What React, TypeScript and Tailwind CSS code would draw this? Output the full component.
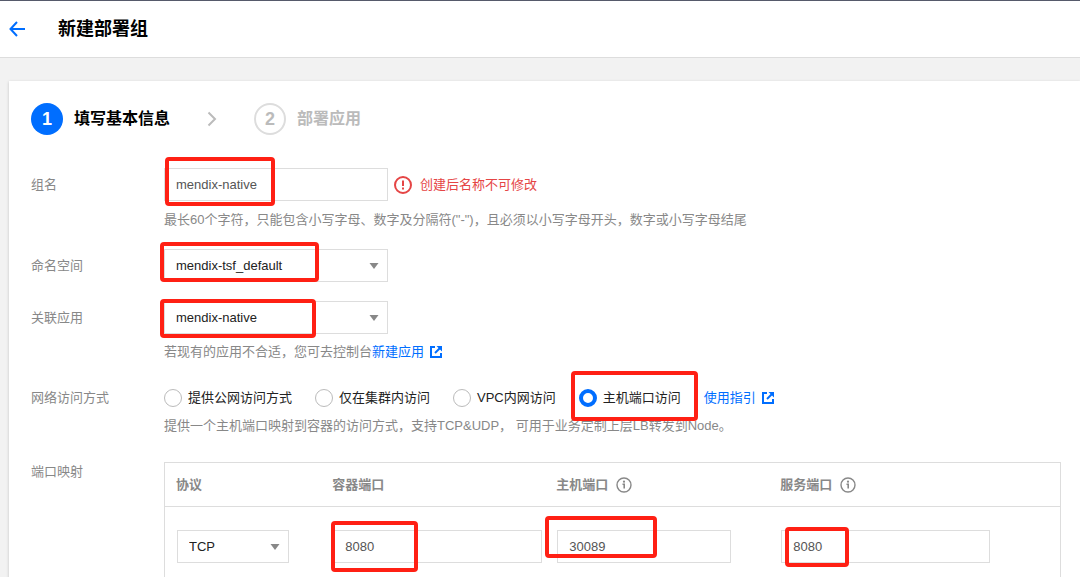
import type { ReactNode } from "react";

type MarkProps = { className: string };

// 红色标注框
const Mark = ({ className }: MarkProps) => (
  <span
    aria-hidden="true"
    className={`pointer-events-none absolute z-10 rounded-sm border-4 border-[#ff2014] ${className}`}
  />
);

const ExternalIcon = () => (
  <svg viewBox="0 0 12 12" className="h-3 w-3" fill="none" stroke="currentColor" strokeWidth="2">
    <path d="M5 1H1v10h10V7" />
    <path d="M10.500 1.500L5 7" />
    <path d="M6.500 0H12v5.500z" fill="currentColor" stroke="none" />
  </svg>
);

const InfoIcon = () => (
  <svg viewBox="0 0 16 16" className="h-4 w-4" fill="none" stroke="#888" strokeWidth="1.4">
    <circle cx="8" cy="8" r="7" />
    <circle cx="8" cy="4.700" r="1.100" fill="#888" stroke="none" />
    <path d="M6.500 7.200h1.700v4.300" strokeWidth="1.600" />
  </svg>
);

type FieldProps = { label: string; htmlFor?: string; children: ReactNode };

const Field = ({ label, htmlFor, children }: FieldProps) => (
  <div className="grid grid-cols-[133px_minmax(0,1fr)]">
    <label htmlFor={htmlFor} className="leading-[33px] text-[#888]">
      {label}
    </label>
    <div>{children}</div>
  </div>
);

type SelectProps = { id: string; value: string; label?: string };

const Select = ({ id, value, label }: SelectProps) => (
  <>
    <select
      id={id}
      aria-label={label}
      className="h-[33px] w-full appearance-none border border-[#ddd] bg-white pr-8 pl-[11px] text-[#222] outline-none"
    >
      <option>{value}</option>
    </select>
    <svg viewBox="0 0 10 6" className="pointer-events-none absolute top-3.5 right-[9px] h-1.5 w-2.5">
      <path d="M0.500 0h9L5 6z" fill="#888" />
    </svg>
  </>
);

const inputClass = "h-[33px] w-full border border-[#ddd] bg-white px-[11px] text-[#555] outline-none";
const linkClass = "inline-flex items-center gap-1.5 text-[#006eff]";

const accessModes = [
  { id: "public", label: "提供公网访问方式" },
  { id: "cluster", label: "仅在集群内访问" },
  { id: "vpc", label: "VPC内网访问" },
  { id: "host", label: "主机端口访问" },
];

const App = () => (
  <div className='h-screen overflow-hidden bg-[#f2f2f2] font-["Liberation_Sans","Noto_Sans_CJK_SC",sans-serif] text-[13px] leading-5'>
    <header className="flex h-[58px] items-center border-t border-b border-t-[#565a6b] border-b-[#ddd] bg-white pl-[9px]">
      <button type="button" aria-label="返回" className="mr-8 text-[#006eff]">
        <svg viewBox="0 0 17 16" className="h-4 w-[17px]" fill="none" stroke="currentColor" strokeWidth="2">
          <path d="M8 1L1.500 8L8 15M1.500 8H16" />
        </svg>
      </button>
      <h1 className="text-lg font-bold text-black">新建部署组</h1>
    </header>

    <main className="mt-[23px] ml-[9px] bg-white pt-[22px] pr-[19px] pl-[22px] shadow-[0_1px_3px_rgba(0,0,0,0.2)]">
      <ol className="flex h-8 items-center text-base font-bold">
        <li className="flex items-center gap-[11px] text-black">
          <span className="flex h-8 w-8 items-center justify-center rounded-full bg-[#006eff] text-lg text-white">1</span>
          填写基本信息
        </li>
        <li aria-hidden="true" className="mx-[37px]">
          <svg viewBox="0 0 10 16" className="h-4 w-2.5" fill="none" stroke="#bbb" strokeWidth="2">
            <path d="M1.500 1.500L8 8l-6.500 6.500" />
          </svg>
        </li>
        <li className="flex items-center gap-[11px] text-[#bbb]">
          <span className="flex h-8 w-8 items-center justify-center rounded-full border-2 border-[#ddd] text-lg">2</span>
          部署应用
        </li>
      </ol>

      <form className="mt-[33px] flex flex-col gap-[19px]">
        <Field label="组名" htmlFor="group-name">
          <div className="flex items-center">
            <div className="relative w-56">
              <input id="group-name" defaultValue="mendix-native" className={inputClass} />
              <Mark className="-top-[11px] left-px h-[49px] w-[110px]" />
            </div>
            <svg viewBox="0 0 18 18" className="mr-2 ml-1.5 h-[18px] w-[18px]" fill="none" stroke="#e54545" strokeWidth="2">
              <circle cx="9" cy="9" r="8" />
              <path d="M9 4.500v5.500M9 11.500v2" />
            </svg>
            <span className="text-[#e54545]">创建后名称不可修改</span>
          </div>
          <p className="mt-[9px] text-[#888]">
            最长60个字符，只能包含小写字母、数字及分隔符("-")，且必须以小写字母开头，数字或小写字母结尾
          </p>
        </Field>

        <Field label="命名空间" htmlFor="namespace">
          <div className="relative w-56">
            <Select id="namespace" value="mendix-tsf_default" />
            <Mark className="-top-[7px] -left-1 h-10 w-[159px]" />
          </div>
        </Field>

        <Field label="关联应用" htmlFor="app">
          <div className="relative w-56">
            <Select id="app" value="mendix-native" />
            <Mark className="-top-0.5 -left-1 h-[39px] w-[156px]" />
          </div>
          <p className="mt-2 flex text-[#888]">
            若现有的应用不合适，您可去控制台
            <a href="#create" className={linkClass}>
              新建应用
              <ExternalIcon />
            </a>
          </p>
        </Field>

        <Field label="网络访问方式">
          <div className="flex h-[33px] items-center gap-[23px]">
            {accessModes.map((mode) => (
              <label key={mode.id} className="relative flex items-center gap-1.5 text-[#222]">
                <input
                  type="radio"
                  name="access"
                  defaultChecked={mode.id === "host"}
                  className="h-[18px] w-[18px] appearance-none rounded-full border border-[#bbb] bg-white checked:border-4 checked:border-[#006eff]"
                />
                {mode.label}
                {mode.id === "host" && <Mark className="-top-[17px] -left-2 h-[50px] w-[127px]" />}
              </label>
            ))}
            <a href="#guide" className={linkClass}>
              使用指引
              <ExternalIcon />
            </a>
          </div>
          <p className="mt-0.5 text-[#888]">
            提供一个主机端口映射到容器的访问方式，支持TCP&amp;UDP， 可用于业务定制上层LB转发到Node。
          </p>
        </Field>

        <Field label="端口映射">
          <table className="mt-[7px] w-full table-fixed border-collapse border border-[#ddd] text-left">
            <thead>
              <tr className="h-11 border-b border-[#ddd] text-[#888]">
                <th className="w-[17.5%] px-[11px]">协议</th>
                <th className="w-1/4 px-[11px]">容器端口</th>
                <th className="w-1/4 px-[11px]">
                  <span className="flex items-center gap-2">主机端口 <InfoIcon /></span>
                </th>
                <th className="px-[11px]">
                  <span className="flex items-center gap-2">服务端口 <InfoIcon /></span>
                </th>
              </tr>
            </thead>
            <tbody>
              <tr>
                <td className="px-3 py-[23px]">
                  <div className="relative w-28">
                    <Select id="protocol" value="TCP" label="协议" />
                  </div>
                </td>
                <td className="pl-3">
                  <div className="relative w-[209px]">
                    <input aria-label="容器端口" defaultValue="8080" className={inputClass} />
                    <Mark className="-top-[9px] -left-0.5 h-[51px] w-[87px]" />
                  </div>
                </td>
                <td className="pl-3">
                  <div className="relative w-[174px]">
                    <input aria-label="主机端口" defaultValue="30089" className={inputClass} />
                    <Mark className="-top-[14px] -left-3 h-[42px] w-28" />
                  </div>
                </td>
                <td className="pl-3">
                  <div className="relative w-[209px]">
                    <input aria-label="服务端口" defaultValue="8080" className={inputClass} />
                    <Mark className="-top-[3px] left-1 h-10 w-16" />
                  </div>
                </td>
              </tr>
            </tbody>
          </table>
        </Field>
      </form>
    </main>
  </div>
);

export default App;
